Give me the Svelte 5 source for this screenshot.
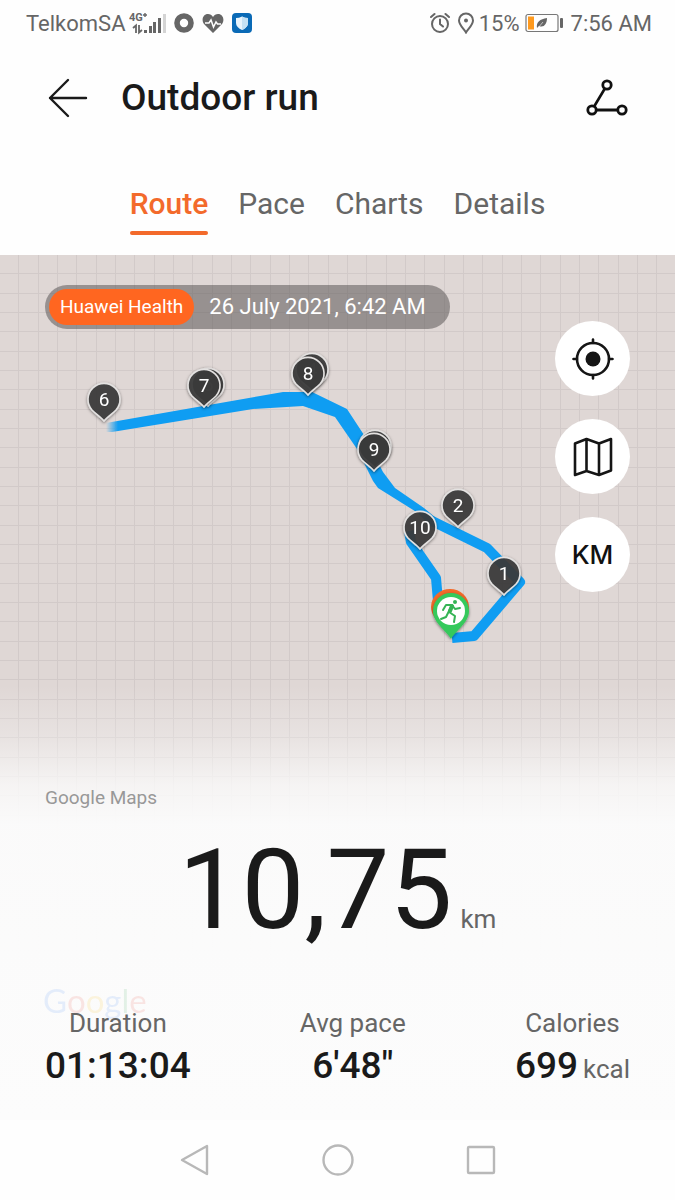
<script>
  const tabs = ["Route", "Pace", "Charts", "Details"];
  let active = $state("Route");

  // tip of every pin on the map canvas, drawn back to front
  const pins = [
    { x: 312, y: 136, label: "4", behind: true },
    { x: 308, y: 140, label: "8" },
    { x: 208, y: 151, label: "5", behind: true },
    { x: 204, y: 152, label: "7" },
    { x: 104, y: 166, label: "6" },
    { x: 375, y: 213, label: "" },
    { x: 374, y: 216, label: "9" },
    { x: 458, y: 272, label: "2" },
    { x: 420, y: 294, label: "10" },
    { x: 504, y: 340, label: "1" },
  ];

  const stats = [
    { label: "Duration", value: "01:13:04" },
    { label: "Avg pace", value: "6'48\"" },
    { label: "Calories", value: "699", unit: "kcal" },
  ];

  const logo = [
    ["G", "blue"],
    ["o", "red"],
    ["o", "yellow"],
    ["g", "blue"],
    ["l", "green"],
    ["e", "red"],
  ];
</script>

<div class="screen">
  <div class="status">
    <div class="status-side">
      <span class="carrier">TelkomSA</span>
      <svg class="signal" width="37" height="24" viewBox="0 0 37 24">
        <text x="0" y="10">4G</text>
        <path d="M14 4h4M16 2v4" fill="none" stroke="#666" stroke-width="1.400" />
        <path d="M4 17l3-2.500V22M10 14v7.500l3-2.500" fill="none" stroke="#666" stroke-width="1.800" />
        <rect x="15" y="19" width="3" height="3" />
        <rect x="20" y="15" width="3" height="7" />
        <rect x="24" y="11" width="3" height="11" />
        <rect x="29" y="7" width="3" height="15" />
        <rect x="34" y="3" width="3" height="19" fill="#d4d4d4" />
      </svg>
      <svg width="20" height="20" viewBox="0 0 20 20">
        <circle cx="10" cy="10" r="7" fill="none" stroke="#666" stroke-width="5.600" />
      </svg>
      <svg width="22" height="20" viewBox="0 0 22 20">
        <path d="M11 20 2 11C-1 7 1 1 6 1c2 0 4 1 5 3 1-2 3-3 5-3 5 0 7 6 4 10z" fill="#666" />
        <path d="M3 10h4l2-3 2.500 7 2.500-5 1.500 2H19" fill="none" stroke="#fff" stroke-width="1.500" />
      </svg>
      <svg width="20" height="20" viewBox="0 0 20 20">
        <rect width="20" height="20" rx="4" fill="#0a6ab6" />
        <path d="M10 3.500c2 1 4 1.500 6 1.500v5c0 3-2.500 5.500-6 7-3.500-1.500-6-4-6-7V5c2 0 4-.5 6-1.500z" fill="#e8f4fc" />
        <path d="M10 3.500c2 1 4 1.500 6 1.500v5c0 3-2.500 5.500-6 7z" fill="#c4e1f4" />
      </svg>
    </div>
    <div class="status-side">
      <svg width="20" height="22" viewBox="0 0 20 22" fill="none" stroke="#666" stroke-width="2" stroke-linecap="round">
        <circle cx="10" cy="12" r="8" />
        <path d="M10 7.500V12l3 2.500M1 5l3.500-3M19 5l-3.500-3" />
      </svg>
      <svg width="16" height="22" viewBox="0 0 16 22">
        <path d="M8 20.500C6 17 1 13 1 8.500a7 7 0 0 1 14 0C15 13 10 17 8 20.500z" fill="none" stroke="#666" stroke-width="2" />
        <circle cx="8" cy="8.500" r="2" fill="#666" />
      </svg>
      <span class="charge">15%</span>
      <svg width="38" height="20" viewBox="0 0 38 20">
        <rect x="1" y="1.500" width="32" height="17" rx="2" fill="none" stroke="#777" stroke-width="1.200" />
        <rect x="3" y="3.500" width="6" height="13" fill="#ff9a1e" />
        <rect x="35" y="5" width="3" height="10" rx="1" fill="#666" />
        <path d="M12 15c-1-6 3-9 10-10 0 6-3 10-8 8z" fill="#666" />
        <path d="M13 15l5-6" stroke="#fff" stroke-width=".6" />
      </svg>
      <span>7:56 AM</span>
    </div>
  </div>

  <header>
    <button class="icon" type="button" aria-label="Back">
      <svg width="40" height="40" viewBox="0 0 40 40" fill="none" stroke="#1a1a1a" stroke-width="2.400" stroke-linecap="round" stroke-linejoin="round">
        <path d="M20 2 2 20l18 18M2 20h36" />
      </svg>
    </button>
    <h1>Outdoor run</h1>
    <button class="icon" type="button" aria-label="Share route">
      <svg width="42" height="38" viewBox="0 0 42 38" fill="none" stroke="#111" stroke-width="2.800">
        <circle cx="21" cy="6" r="4.200" />
        <circle cx="6" cy="31" r="4.200" />
        <circle cx="36" cy="31" r="4.200" />
        <path d="M18.800 9.600 8.200 27.400M10.200 31h21.600" />
      </svg>
    </button>
  </header>

  <nav class="tabs">
    {#each tabs as tab}
      <button type="button" class:active={active === tab} onclick={() => (active = tab)}>{tab}</button>
    {/each}
  </nav>

  <main>
    <div class="grid"></div>
    <svg class="route" width="675" height="440" viewBox="0 0 675 440">
      <defs>
        <linearGradient id="start" gradientUnits="userSpaceOnUse" x1="106" y1="0" x2="118" y2="0">
          <stop offset="0" stop-color="#0f9df2" stop-opacity="0" />
          <stop offset="1" stop-color="#0f9df2" />
        </linearGradient>
        <filter id="shade" x="-30%" y="-30%" width="160%" height="160%">
          <feDropShadow dx="0" dy="1" stdDeviation="1.500" flood-opacity=".5" />
        </filter>
      </defs>

      <path
        d="M106 168 260 141 283 137 312 137 347 154 364 180 383 217 395 233 424 253 437 264 430 271 418 258 378 233 373 226 357 194 335 162 303 151 253 154 112 177 106 177z"
        fill="url(#start)"
      />
      <path d="M428 264 487 293 520 327 474 381 452 383" class="line" />
      <path d="M409 276 411 287 436 323 438 346" class="line" />

      {#each pins as pin}
        <g transform="translate({pin.x} {pin.y})" filter="url(#shade)">
          <path
            d="M0 0C-3-4-8-7-12-11A16 16 0 1 1 12-11C8-7 3-4 0 0z"
            fill="#3c3c3c"
            fill-opacity=".9"
            stroke="#e4e2e1"
            stroke-width="1.600"
          />
          {#if pin.label}<text y="-15" class:behind={pin.behind}>{pin.label}</text>{/if}
        </g>
      {/each}

      <g transform="translate(450 380)">
        <path d="M0 0C-4-7-19-16-19-28A19 18 0 0 1 19-28C19-16 4-7 0 0z" fill="#f36a2b" />
      </g>
      <g transform="translate(451 384)" filter="url(#shade)">
        <path d="M0 0C-4-8-18-16-18-28A18 18 0 0 1 18-28C18-16 4-8 0 0z" fill="#35c95b" />
        <circle cy="-28" r="14" fill="#fff" />
        <circle cx="4" cy="-37" r="2" fill="#35b454" />
        <path d="M1-34-3-26M-8-29-5-34 1-34 4-30 9-31M-3-26-5-22-10-20M-2-27 4-23 3-17" class="runner" />
        <path d="M1-33-1-28" class="runner body" />
      </g>
    </svg>

    <div class="overlay">
      <div class="source">
        <span class="badge">Huawei Health</span>
        <time datetime="2021-07-26T06:42">26 July 2021, 6:42 AM</time>
      </div>
      <div class="controls">
        <button type="button" aria-label="Centre route">
          <svg width="42" height="42" viewBox="0 0 42 42" fill="none" stroke="#151515" stroke-width="2.600" stroke-linecap="round">
            <circle cx="21" cy="21" r="16" />
            <circle cx="21" cy="21" r="7.500" fill="#151515" stroke="none" />
            <path d="M21 1.500V5M21 37v3.500M1.500 21H5M37 21h3.500" />
          </svg>
        </button>
        <button type="button" aria-label="Map type">
          <svg width="40" height="40" viewBox="0 0 40 40" fill="none" stroke="#151515" stroke-width="2.600" stroke-linejoin="round">
            <path d="M2 6.500 13.500 2 26 6.500 38 2v31.500L26 38 13.500 34 2 38zM13.500 2v32M26 6.500V38" />
          </svg>
        </button>
        <button type="button">KM</button>
      </div>
    </div>

    <p class="attribution">Google Maps</p>

    <p class="distance">10,75<span>km</span></p>

    <div class="summary">
      <div class="logo" aria-hidden="true">
        {#each logo as [letter, tone]}<span class={tone}>{letter}</span>{/each}
      </div>
      <dl>
        {#each stats as stat}
          <div class="stat">
            <dt>{stat.label}</dt>
            <dd>{stat.value}{#if stat.unit}<span>{stat.unit}</span>{/if}</dd>
          </div>
        {/each}
      </dl>
    </div>
  </main>

  <div class="navbar">
    <button class="icon" type="button" aria-label="System back">
      <svg width="32" height="32" viewBox="0 0 32 32"><path d="M28 2v28L3 16z" /></svg>
    </button>
    <button class="icon" type="button" aria-label="Home">
      <svg width="32" height="32" viewBox="0 0 32 32"><circle cx="16" cy="16" r="14.500" /></svg>
    </button>
    <button class="icon" type="button" aria-label="Recent apps">
      <svg width="32" height="32" viewBox="0 0 32 32"><rect x="3" y="3" width="26" height="26" rx="1" /></svg>
    </button>
  </div>
</div>

<style>
  :global(body) {
    margin: 0;
    background: #fefefe;
  }

  .screen {
    min-height: 100vh;
    display: flex;
    flex-direction: column;
    font-family: Roboto, "Liberation Sans", sans-serif;
    color: #1a1a1a;
  }

  button {
    padding: 0;
    border: 0;
    background: none;
    font-family: inherit;
    color: inherit;
    cursor: pointer;
  }

  svg {
    display: block;
    flex-shrink: 0;
  }

  h1,
  p,
  dl,
  dd {
    margin: 0;
  }

  .status {
    display: flex;
    justify-content: space-between;
    height: 46px;
    padding: 0 23px 0 26px;
    font-size: 22px;
    color: #666;
  }

  .status-side {
    display: flex;
    align-items: center;
    gap: 8px;
  }

  .carrier {
    margin-right: -4px;
  }

  .charge {
    margin: 0 -3px;
  }

  .signal {
    fill: #666;
  }

  .signal text {
    font-size: 11px;
    font-weight: 700;
  }

  header {
    display: flex;
    align-items: center;
    gap: 33px;
    height: 104px;
    padding: 0 47px 0 48px;
  }

  h1 {
    flex: 1;
    font-size: 37px;
    line-height: 44px;
    font-weight: 500;
  }

  .tabs {
    display: flex;
    justify-content: center;
    gap: 30px;
    padding: 34px 0 20px;
  }

  .tabs button {
    padding-bottom: 11px;
    font-size: 30px;
    line-height: 40px;
    color: #666;
    position: relative;
  }

  .tabs .active {
    color: #f36a2b;
    font-weight: 500;
  }

  .tabs .active::after {
    content: "";
    position: absolute;
    left: 0;
    right: 0;
    bottom: 0;
    height: 4px;
    border-radius: 2px;
    background: #f36a2b;
  }

  main {
    flex: 1;
    display: flex;
    flex-direction: column;
    position: relative;
    overflow: hidden;
    padding: 30px 45px 26px;
    background: #dfd7d5;
  }

  .grid {
    --rule: #d2cac9;
    position: absolute;
    inset: 0;
    background:
      linear-gradient(rgb(251 251 251 / 0) 430px, rgb(251 251 251 / 0.3) 480px, rgb(251 251 251 / 0.8) 530px, rgb(251 251 251 / 0.98) 570px, #fcfcfc 100%),
      linear-gradient(90deg, transparent 18px, var(--rule) 18px 19px, transparent 19px 38px, var(--rule) 38px 39px, transparent 39px 57px, var(--rule) 57px) 0 0 / 58px 58px,
      linear-gradient(transparent 18px, var(--rule) 18px 19px, transparent 19px 38px, var(--rule) 38px 39px, transparent 39px 57px, var(--rule) 57px) 0 0 / 58px 58px;
  }

  .route {
    position: absolute;
    top: 0;
    left: 0;
  }

  .route text {
    fill: #fff;
    font-size: 19px;
    text-anchor: middle;
  }

  .route .behind {
    fill: #777;
  }

  .line {
    fill: none;
    stroke: #0f9df2;
    stroke-width: 10;
    stroke-linejoin: round;
  }

  .runner {
    fill: none;
    stroke: #35b454;
    stroke-width: 2;
    stroke-linecap: round;
    stroke-linejoin: round;
  }

  .body {
    stroke-width: 4;
  }

  .overlay {
    position: relative;
    display: flex;
    justify-content: space-between;
    align-items: flex-start;
  }

  .source {
    display: flex;
    align-items: center;
    gap: 15px;
    padding: 4px 24px 4px 4px;
    border-radius: 22px;
    background: rgb(80 75 75 / 0.5);
    color: #fff;
    font-size: 22px;
    line-height: 36px;
  }

  .badge {
    padding: 0 11px;
    border-radius: 18px;
    background: #ff6620;
    font-size: 19px;
  }

  .controls {
    display: flex;
    flex-direction: column;
    gap: 23px;
    padding-top: 36px;
  }

  .controls button {
    display: grid;
    place-items: center;
    width: 75px;
    height: 75px;
    border-radius: 50%;
    background: #fff;
    color: #111;
    font-family: Inter, Roboto, sans-serif;
    font-size: 26px;
    font-weight: 500;
  }

  .attribution {
    position: relative;
    margin-top: auto;
    font-size: 19px;
    line-height: 24px;
    color: #989898;
  }

  .distance {
    position: relative;
    text-align: center;
    padding-top: 14px;
    font-size: 112px;
    line-height: 132px;
  }

  .distance span {
    margin-left: 8px;
    font-size: 26px;
    color: #666;
  }

  .summary {
    position: relative;
    padding-top: 20px;
  }

  .logo {
    position: absolute;
    top: -3px;
    left: -2px;
    font-family: Lato, sans-serif;
    font-size: 33px;
    line-height: 36px;
    opacity: 0.12;
  }

  .blue {
    color: #4285f4;
  }

  .red {
    color: #ea4335;
  }

  .yellow {
    color: #fbbc05;
  }

  .green {
    color: #34a853;
  }

  dl {
    position: relative;
    display: flex;
    justify-content: space-between;
  }

  .stat {
    text-align: center;
  }

  dt,
  dd span {
    font-size: 26px;
    font-weight: 400;
    color: #666;
  }

  dt {
    line-height: 36px;
  }

  dd {
    font-size: 37px;
    line-height: 50px;
    font-weight: 500;
  }

  dd span {
    margin-left: 5px;
  }

  .navbar {
    display: flex;
    justify-content: center;
    align-items: center;
    gap: 111px;
    height: 80px;
  }

  .navbar svg {
    fill: none;
    stroke: #b8b8b8;
    stroke-width: 2.400;
    stroke-linejoin: round;
  }
</style>
